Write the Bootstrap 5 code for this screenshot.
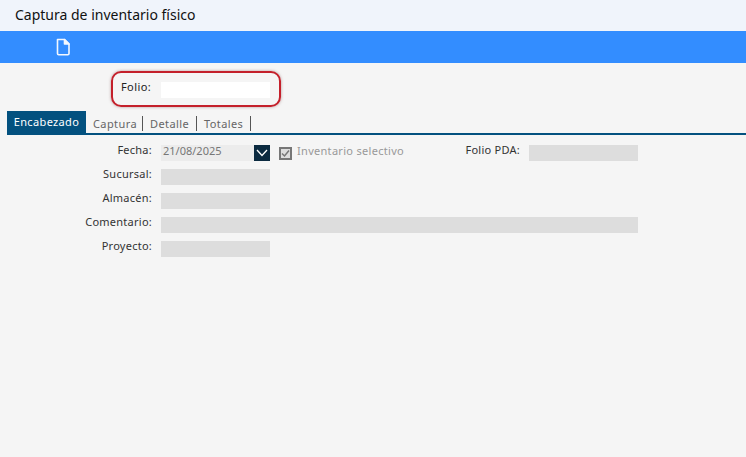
<!DOCTYPE html>
<html lang="es">
<head>
  <meta charset="UTF-8">
  <meta name="viewport" content="width=device-width, initial-scale=1.0">
  <title>Captura de inventario físico</title>
  <link href="https://cdn.jsdelivr.net/npm/bootstrap@5.3.0/dist/css/bootstrap.min.css" rel="stylesheet">
  <style>
    html, body { height: 100%; }
    body {
      background-color: #f5f5f5;
      color: #222;
      font-family: "Noto Sans", "DejaVu Sans", sans-serif;
      font-size: 11px;
      overflow: hidden;
    }
    .title-bar {
      height: 31px;
      padding: 0 0 2px 15px;
      background-color: #f0f4fb;
      color: #111;
      font-size: 14px;
    }
    .tool-bar {
      height: 32px;
      padding-left: 55px;
      background-color: #338dff;
    }
    .folio-wrap {
      width: 170px;
      height: 36px;
      margin: 8px 0 4px 111px;
      padding-left: 8px;
      border: 2px solid #c4202b;
      border-radius: 10px;
      box-shadow: 0 0 3px rgba(120, 60, 60, .5);
      gap: 9px;
    }
    .folio-label {
      width: 31px;
      margin-bottom: 4px;
      letter-spacing: .4px;
    }
    .folio-input {
      width: 109px;
      height: 16px;
      margin-top: 1px;
      background-color: #fff;
    }
    .tab-row {
      height: 24px;
      margin-left: 7px;
      border-bottom: 2px solid #03517f;
    }
    .tab-on {
      width: 79px;
      height: 22px;
      background-color: #03517f;
      color: #fff;
      font-size: 11px;
      line-height: 22px;
      letter-spacing: .35px;
      text-align: center;
    }
    .tab-off {
      width: 54px;
      height: 15px;
      margin-top: 5px;
      padding-left: 7px;
      border-right: 1px solid #555;
      color: #666;
      line-height: 15px;
      letter-spacing: .4px;
    }
    .tab-first { width: 57px; }
    .form-area {
      padding-top: 10px;
      row-gap: 8px;
    }
    .form-line { height: 16px; }
    .field-label {
      width: 152px;
      color: #333;
      line-height: 10px;
      letter-spacing: .25px;
      text-align: right;
      align-self: flex-start;
    }
    .field-box {
      width: 109px;
      height: 16px;
      margin-left: 9px;
      background-color: #dddddd;
    }
    .field-long { width: 477px; }
    .date-box {
      width: 109px;
      height: 16px;
      margin-left: 9px;
      padding-left: 2px;
      background-color: #ececec;
      color: #777;
      line-height: 12px;
    }
    .date-btn {
      width: 16px;
      height: 16px;
      background-color: #0b2a40;
    }
    .check-box {
      width: 13px;
      height: 13px;
      margin-left: 9px;
      border: 2px solid #777;
      background-color: #ddd;
    }
    .check-text {
      width: 111px;
      margin-left: 5px;
      margin-bottom: 3px;
      color: #999;
      letter-spacing: .3px;
    }
    .pda-label {
      width: 112px;
      color: #333;
      line-height: 10px;
      letter-spacing: .25px;
      text-align: right;
      align-self: flex-start;
    }
  </style>
</head>
<body>
  <div class="title-bar d-flex align-items-center">Captura de inventario físico</div>
  <div class="tool-bar d-flex align-items-center">
    <svg width="16" height="18" viewBox="0 0 16 18" fill="none" stroke="#f2f7ff" stroke-width="1.6" stroke-linejoin="round">
      <path d="M2.5 1.5h7l4.5 4.5v9.5a1.2 1.2 0 0 1-1.2 1.2H3.7a1.2 1.2 0 0 1-1.2-1.2z"/>
      <path d="M9.5 1.5l4.5 4.5h-4.5z" fill="#f2f7ff"/>
    </svg>
  </div>

  <div class="folio-wrap d-flex align-items-center">
    <span class="folio-label">Folio:</span>
    <div class="folio-input"></div>
  </div>

  <div class="tab-row d-flex">
    <div class="tab-on">Encabezado</div>
    <div class="tab-off tab-first">Captura</div>
    <div class="tab-off">Detalle</div>
    <div class="tab-off">Totales</div>
  </div>

  <div class="form-area d-flex flex-column">
    <div class="form-line d-flex align-items-center">
      <div class="field-label">Fecha:</div>
      <div class="date-box d-flex justify-content-between">
        <span>21/08/2025</span>
        <div class="date-btn d-flex align-items-center justify-content-center">
          <svg width="12" height="8" viewBox="0 0 12 8" fill="none" stroke="#fff" stroke-width="1.3"><path d="M1 1l5 5.5L11 1"/></svg>
        </div>
      </div>
      <div class="check-box d-flex align-items-center justify-content-center">
        <svg width="9" height="9" viewBox="0 0 9 9" fill="none" stroke="#777" stroke-width="1.5"><path d="M1 4.5l2.5 2.5L8 1.5"/></svg>
      </div>
      <span class="check-text">Inventario selectivo</span>
      <div class="pda-label">Folio PDA:</div>
      <div class="field-box"></div>
    </div>
    <div class="form-line d-flex">
      <div class="field-label">Sucursal:</div>
      <div class="field-box"></div>
    </div>
    <div class="form-line d-flex">
      <div class="field-label">Almacén:</div>
      <div class="field-box"></div>
    </div>
    <div class="form-line d-flex">
      <div class="field-label">Comentario:</div>
      <div class="field-box field-long"></div>
    </div>
    <div class="form-line d-flex">
      <div class="field-label">Proyecto:</div>
      <div class="field-box"></div>
    </div>
  </div>

  <script src="https://cdn.jsdelivr.net/npm/bootstrap@5.3.0/dist/js/bootstrap.bundle.min.js"></script>
</body>
</html>
